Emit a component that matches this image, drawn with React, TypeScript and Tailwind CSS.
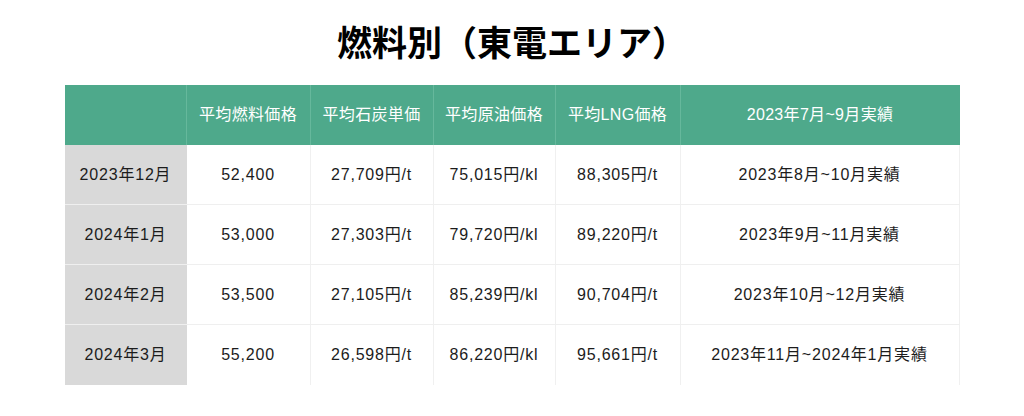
const headers = ["", "平均燃料価格", "平均石炭単価", "平均原油価格", "平均LNG価格", "2023年7月~9月実績"];

const rows = [
  ["2023年12月", "52,400", "27,709円/t", "75,015円/kl", "88,305円/t", "2023年8月~10月実績"],
  ["2024年1月", "53,000", "27,303円/t", "79,720円/kl", "89,220円/t", "2023年9月~11月実績"],
  ["2024年2月", "53,500", "27,105円/t", "85,239円/kl", "90,704円/t", "2023年10月~12月実績"],
  ["2024年3月", "55,200", "26,598円/t", "86,220円/kl", "95,661円/t", "2023年11月~2024年1月実績"],
];

export default function App() {
  return (
    <div className="w-[1024px] h-[416px] bg-white flex flex-col items-center font-['Noto_Sans_CJK_JP',sans-serif]">
      <h1 className="mt-[20px] text-[35px] leading-[42px] font-bold text-black">
        燃料別（東電エリア）
      </h1>
      <div className="mt-[23px] w-[895px] grid grid-cols-[122px_124px_123px_122px_125px_1fr] text-[16px] font-['Liberation_Sans','Noto_Sans_CJK_JP',sans-serif]">
        {headers.map((h, i) => (
          <div
            key={i}
            className={`h-[60px] flex items-center justify-center bg-[#4ea98b] text-white tracking-[0.02em] ${
              i < headers.length - 1 ? "border-r border-[#66b89c]" : ""
            }`}
          >
            {h}
          </div>
        ))}
        {rows.map((row, r) =>
          row.map((cell, c) => (
            <div
              key={`${r}-${c}`}
              className={`h-[60px] flex items-center justify-center text-[#1c1c1c] tracking-[0.05em] ${
                c === 0 ? "bg-[#d9d9d9]" : "bg-white border-r border-[#f0f0f0]"
              } ${r < rows.length - 1 ? "border-b border-b-[#efefef]" : ""}`}
            >
              {cell}
            </div>
          ))
        )}
      </div>
    </div>
  );
}
